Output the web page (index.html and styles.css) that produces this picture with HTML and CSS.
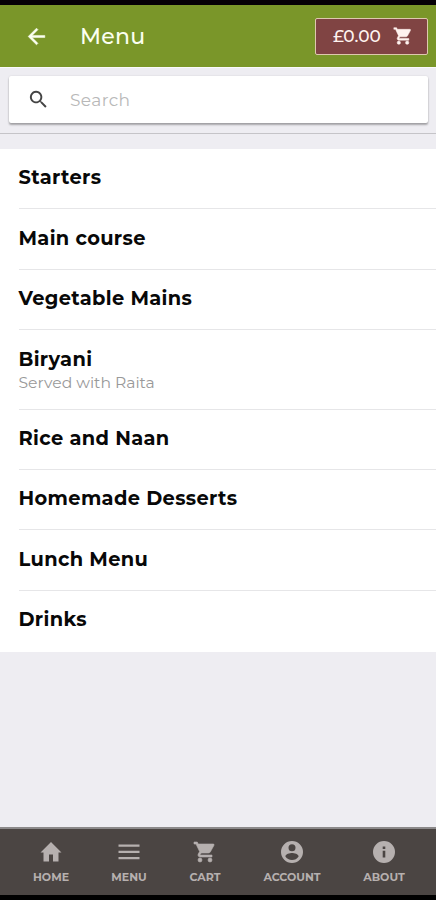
FILE: index.html
```html
<!DOCTYPE html>
<html lang="en">
<head>
<meta charset="utf-8">
<title>Menu</title>
<link rel="stylesheet" href="styles.css">
</head>
<body>
<div class="app">
  <header class="topbar">
    <svg class="back" viewBox="0 0 24 24"><path d="M20 11H7.83l5.59-5.59L12 4l-8 8 8 8 1.41-1.41L7.83 13H20z"/></svg>
    <h1>Menu</h1>
    <button class="basket"><span>£0.00</span><svg viewBox="0 0 24 24"><path d="M7 18a2 2 0 1 0 0 4 2 2 0 0 0 0-4zM1 2v2h2l3.6 7.59-1.35 2.45c-.16.28-.25.61-.25.96 0 1.1.9 2 2 2h12v-2H7.42c-.14 0-.25-.11-.25-.25l.03-.12.9-1.63h7.45c.75 0 1.41-.41 1.75-1.03l3.58-6.49A1 1 0 0 0 20 4H5.21l-.94-2zM17 18a2 2 0 1 0 0 4 2 2 0 0 0 0-4z"/></svg></button>
  </header>
  <div class="search-area">
    <div class="search">
      <svg viewBox="0 0 24 24"><path d="M15.5 14h-.79l-.28-.27A6.5 6.5 0 1 0 13.73 14.43l.27.28v.79l5 4.99L20.49 19zm-6 0a4.5 4.5 0 1 1 0-9 4.5 4.5 0 0 1 0 9z"/></svg>
      <span>Search</span>
    </div>
  </div>
  <main>
    <ul class="list">
      <li><b>Starters</b></li>
      <li><b>Main course</b></li>
      <li><b>Vegetable Mains</b></li>
      <li class="tall"><b>Biryani</b><small>Served with Raita</small></li>
      <li><b>Rice and Naan</b></li>
      <li><b>Homemade Desserts</b></li>
      <li><b>Lunch Menu</b></li>
      <li><b>Drinks</b></li>
    </ul>
  </main>
  <nav class="tabs">
    <a class="home"><svg viewBox="0 0 24 24"><path d="M10 21.500v-7h4v7h5.500v-9H22.500L12 2 1.500 12.500h3v9z"/></svg><span>HOME</span></a>
    <a class="menu"><svg viewBox="0 0 24 24"><path d="M1.500 4.500h21v2.300h-21zM1.500 10.700h21V13h-21zM1.500 16.900h21v2.300h-21z"/></svg><span>MENU</span></a>
    <a class="cart"><svg viewBox="0 0 24 24"><path d="M7 18a2 2 0 1 0 0 4 2 2 0 0 0 0-4zM1 2v2h2l3.6 7.59-1.35 2.45c-.16.28-.25.61-.25.96 0 1.1.9 2 2 2h12v-2H7.42c-.14 0-.25-.11-.25-.25l.03-.12.9-1.63h7.45c.75 0 1.41-.41 1.75-1.03l3.58-6.49A1 1 0 0 0 20 4H5.21l-.94-2zM17 18a2 2 0 1 0 0 4 2 2 0 0 0 0-4z"/></svg><span>CART</span></a>
    <a class="account"><svg viewBox="0 0 24 24"><path d="M12 1a11 11 0 1 0 0 22 11 11 0 0 0 0-22zm0 3.300a3.500 3.500 0 1 1 0 7 3.500 3.500 0 0 1 0-7zm0 15.600c-2.800 0-5.200-1.400-6.600-3.500 0-2.200 4.400-3.400 6.600-3.400s6.600 1.200 6.600 3.400a7.900 7.900 0 0 1-6.600 3.500z"/></svg><span>ACCOUNT</span></a>
    <a class="about"><svg viewBox="0 0 24 24"><path fill-rule="evenodd" d="M12 1a11 11 0 1 0 0 22 11 11 0 0 0 0-22zm-1.300 5.500h2.600v2.600h-2.600zm0 4.200h2.600v6.800h-2.600z"/></svg><span>ABOUT</span></a>
  </nav>
</div>
</body>
</html>
```
FILE: styles.css
```css
* { box-sizing: border-box; }
body { margin: 0; font-family: Montserrat, Inter, "Open Sans", sans-serif; }
svg { display: block; fill: currentColor; flex: none; }
.app {
  height: 900px;
  display: flex;
  flex-direction: column;
  background: #eeedf2;
  border-top: 5px solid #050006;
  border-bottom: 5px solid #000;
}
.topbar {
  height: 62px;
  flex: none;
  display: flex;
  align-items: center;
  padding: 0 8px 0 24px;
  background: #7a9629;
  color: #fbfff0;
}
.back { width: 25px; height: 25px; stroke: currentColor; stroke-width: .5; }
h1 { margin: 0 0 0 31px; font-size: 22px; font-weight: 500; letter-spacing: .25px; }
.basket {
  width: 113px;
  height: 37px;
  margin-left: auto;
  padding: 0 14px 0 17px;
  display: flex;
  align-items: center;
  justify-content: space-between;
  font: 500 17px Montserrat, Inter, sans-serif;
  color: #fff3ef;
  background: #804443;
  border: 1px solid #dec9ae;
  border-radius: 2px;
}
.basket svg { width: 20px; height: 20px; stroke: currentColor; stroke-width: .6; }
.search-area {
  height: 67px;
  flex: none;
  padding: 8px 8px 0 9px;
  border-top: 1px solid #fafafa;
  border-bottom: 1px solid #c5c4c8;
}
.search {
  height: 47px;
  display: flex;
  align-items: center;
  padding-left: 18px;
  background: #fff;
  border-radius: 2px;
  box-shadow: 0 2px 2px rgba(0, 0, 0, .3), 0 0 2px rgba(0, 0, 0, .12);
  color: #444;
}
.search svg { width: 23px; height: 23px; }
.search span { margin-left: 20px; font-size: 17px; letter-spacing: .4px; font-weight: 400; color: #b8b8b8; }
main { flex: 1; padding-top: 15px; }
.list { margin: 0; padding: 0 0 0 18.5px; list-style: none; background: #fff; }
.list li { height: 60.4px; padding-top: 16.4px; border-bottom: 1px solid #e6e6e8; }
.list li.tall { height: 79.4px; }
.list li:last-child { height: 61px; border: 0; }
.list b { display: block; font-size: 19.4px; line-height: 24px; font-weight: 700; letter-spacing: .35px; color: #080808; }
.list small { display: block; font-size: 15.6px; line-height: 24px; font-weight: 400; color: #999; }
.tabs {
  height: 68px;
  flex: none;
  display: flex;
  gap: 42px;
  padding: 11px 0 0 33px;
  background: #4b4543;
  border-top: 2px solid #8b898a;
  color: #b6b0af;
}
.tabs a { display: flex; flex-direction: column; align-items: center; }
.tabs svg { width: 24px; height: 24px; }
.tabs .cart svg { stroke: currentColor; stroke-width: .6; }
.tabs span { margin-top: 6px; font-size: 11px; line-height: 14px; font-weight: 700; white-space: nowrap; }
.home, .menu { width: 36px; }
.cart { width: 32px; }
.account { width: 58px; }
.about { width: 42px; }
```
